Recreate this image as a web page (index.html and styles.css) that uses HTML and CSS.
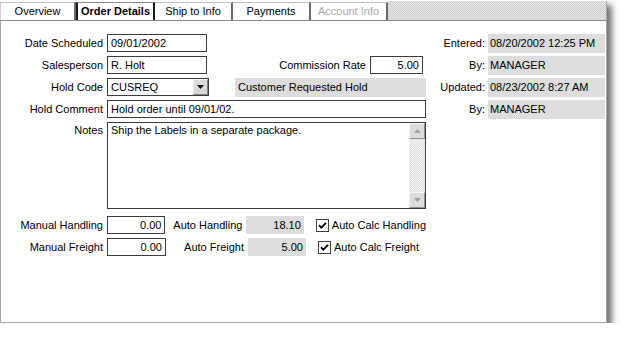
FILE: index.html
```html
<!DOCTYPE html>
<html>
<head>
<meta charset="utf-8">
<link rel="stylesheet" href="styles.css">
</head>
<body>
<div class="window">
  <div class="tabs">
    <div class="tab first">Overview</div>
    <div class="tab active">Order Details</div>
    <div class="tab">Ship to Info</div>
    <div class="tab">Payments</div>
    <div class="tab disabled">Account Info</div>
    <div class="tab-fill"></div>
  </div>
  <div class="panel">
    <div class="form">
      <div class="lbl">Date Scheduled</div>
      <div class="row"><div class="input w100">09/01/2002</div></div>

      <div class="lbl">Salesperson</div>
      <div class="row">
        <div class="input w100">R. Holt</div>
        <div class="lbl grow">Commission Rate</div>
        <div class="input num w53">5.00</div>
      </div>

      <div class="lbl">Hold Code</div>
      <div class="row">
        <div class="input combo">
          <span class="combo-text">CUSREQ</span>
          <span class="combo-btn"><svg width="7" height="4" viewBox="0 0 7 4"><path d="M0 0H7L3.5 4Z" fill="#000"/></svg></span>
        </div>
        <div class="ro hold-desc">Customer Requested Hold</div>
      </div>

      <div class="lbl">Hold Comment</div>
      <div class="row"><div class="input full">Hold order until 09/01/02.</div></div>

      <div class="lbl top">Notes</div>
      <div class="notes">
        <div class="notes-text">Ship the Labels in a separate package.</div>
        <div class="scrollbar">
          <div class="sb-btn"><svg width="7" height="4" viewBox="0 0 7 4"><path d="M3.5 0L7 4H0Z" fill="#a0a0a0"/></svg></div>
          <div class="sb-track"></div>
          <div class="sb-btn"><svg width="7" height="4" viewBox="0 0 7 4"><path d="M0 0H7L3.5 4Z" fill="#a0a0a0"/></svg></div>
        </div>
      </div>

      <div class="lbl gap-top">Manual Handling</div>
      <div class="row gap-top">
        <div class="input num w59">0.00</div>
        <div class="lbl auto-lbl">Auto Handling</div>
        <div class="ro num w58">18.10</div>
        <span class="check"><svg width="13" height="13" viewBox="0 0 13 13"><rect x="0.5" y="0.5" width="12" height="12" fill="#fff" stroke="#404040"/><path d="M3 6.2L5.3 8.6L10 3.8" fill="none" stroke="#000" stroke-width="1.9"/></svg></span>
        <span class="check-lbl">Auto Calc Handling</span>
      </div>

      <div class="lbl">Manual Freight</div>
      <div class="row">
        <div class="input num w59">0.00</div>
        <div class="lbl auto-lbl">Auto Freight</div>
        <div class="ro num w58">5.00</div>
        <span class="check"><svg width="13" height="13" viewBox="0 0 13 13"><rect x="0.5" y="0.5" width="12" height="12" fill="#fff" stroke="#404040"/><path d="M3 6.2L5.3 8.6L10 3.8" fill="none" stroke="#000" stroke-width="1.9"/></svg></span>
        <span class="check-lbl">Auto Calc Freight</span>
      </div>
    </div>

    <div class="audit">
      <div class="lbl">Entered:</div><div class="ro audit-val">08/20/2002 12:25 PM</div>
      <div class="lbl">By:</div><div class="ro audit-val">MANAGER</div>
      <div class="lbl">Updated:</div><div class="ro audit-val">08/23/2002 8:27 AM</div>
      <div class="lbl">By:</div><div class="ro audit-val">MANAGER</div>
    </div>
  </div>
</div>
</body>
</html>
```

FILE: styles.css
```css
* { box-sizing: border-box; }

body {
  margin: 0;
  background: #fff;
  font-family: "Liberation Sans", Arial, sans-serif;
  font-size: 11px;
  color: #000;
}

.window {
  width: 607px;
  height: 323px;
  display: flex;
  flex-direction: column;
  box-shadow: 5px 5px 6px rgba(0, 0, 0, 0.55);
}

/* ---- tabs ---- */
.tabs {
  height: 21px;
  display: flex;
  align-items: flex-end;
  border-bottom: 1px solid #8a8a8a;
  background: #fff;
}

.tab {
  height: 18px;
  line-height: 16px;
  text-align: center;
  background: #fff;
  border-top: 1px solid #c4c4c4;
  border-right: 2px solid #6a6a6a;
  width: 78px;
}
.tab.first { width: 76px; border-left: 1px solid #d0d0d0; }
.tab.active {
  width: 79px;
  font-weight: bold;
  border-left: 2px solid #1a1a1a;
  border-right: 2px solid #1a1a1a;
  border-top-color: #888;
}
.tab.disabled { color: #a8a8a8; width: 77px; }

.tab-fill {
  flex: 1;
  height: 19px;
  background: repeating-conic-gradient(#cfcfcf 0 25%, #e6e6e6 0 50%) 0 0 / 2px 2px;
  border-right: 1px solid #a6a6a6;
}

/* ---- panel ---- */
.panel {
  flex: 1;
  display: flex;
  align-items: flex-start;
  padding-top: 13px;
  border: 1px solid #a6a6a6;
  border-top: none;
  background: #fff;
}

.form {
  display: grid;
  grid-template-columns: 102px 319px;
  column-gap: 4px;
  row-gap: 4px;
  align-items: start;
}

.lbl {
  text-align: right;
  line-height: 18px;
  white-space: nowrap;
}
.lbl.top { line-height: 16px; padding-top: 0; }
.gap-top { margin-top: 3px; }

.row {
  display: flex;
  align-items: center;
  height: 18px;
}

.input {
  height: 18px;
  line-height: 16px;
  border: 1px solid #3c3c3c;
  background: #fff;
  padding: 0 3px;
  white-space: nowrap;
}
.num { text-align: right; }
.w100 { width: 100px; }
.w53 { width: 53px; margin-right: 3px; }
.w59 { width: 59px; }
.w58 { width: 58px; }
.full { width: 319px; }

.grow { flex: 1; margin-right: 4px; }

.combo {
  width: 102px;
  display: flex;
  padding: 0 0 0 3px;
}
.combo-text { flex: 1; }
.combo-btn {
  width: 15px;
  height: 16px;
  display: flex;
  align-items: center;
  justify-content: center;
  background: #d8d8d8;
  border-left: 1px solid #f4f4f4;
  border-top: 1px solid #f4f4f4;
  border-right: 1px solid #808080;
  border-bottom: 1px solid #808080;
}

.ro {
  height: 18px;
  line-height: 18px;
  padding: 0 3px;
  background: repeating-conic-gradient(#d6d6d6 0 25%, #e4e4e4 0 50%) 0 0 / 2px 2px;
  white-space: nowrap;
}
.hold-desc { margin-left: 26px; flex: 1; height: 19px; line-height: 19px; }

/* notes */
.notes {
  height: 87px;
  border: 1px solid #3c3c3c;
  display: flex;
  background: #fff;
}
.notes-text {
  flex: 1;
  padding: 0 3px;
  line-height: 14px;
}
.scrollbar {
  width: 16px;
  display: flex;
  flex-direction: column;
  background: repeating-conic-gradient(#e2e2e2 0 25%, #f2f2f2 0 50%) 0 0 / 2px 2px;
}
.sb-btn {
  height: 16px;
  display: flex;
  align-items: center;
  justify-content: center;
  background: #dcdcdc;
  border-left: 1px solid #f6f6f6;
  border-top: 1px solid #f6f6f6;
  border-right: 1px solid #909090;
  border-bottom: 1px solid #909090;
}
.sb-track { flex: 1; }

.auto-lbl { width: 78px; margin-right: 4px; }

.check {
  width: 13px;
  height: 13px;
  margin-left: 12px;
  display: flex;
}
.check-lbl { margin-left: 3px; white-space: nowrap; }

/* audit column */
.audit {
  margin-left: 5px;
  display: grid;
  grid-template-columns: 54px 117px;
  column-gap: 3px;
  row-gap: 3px;
  grid-auto-rows: 19px;
}
.audit .lbl { line-height: 19px; }
.audit-val { height: 19px; line-height: 19px; padding: 0 2px; }
```
